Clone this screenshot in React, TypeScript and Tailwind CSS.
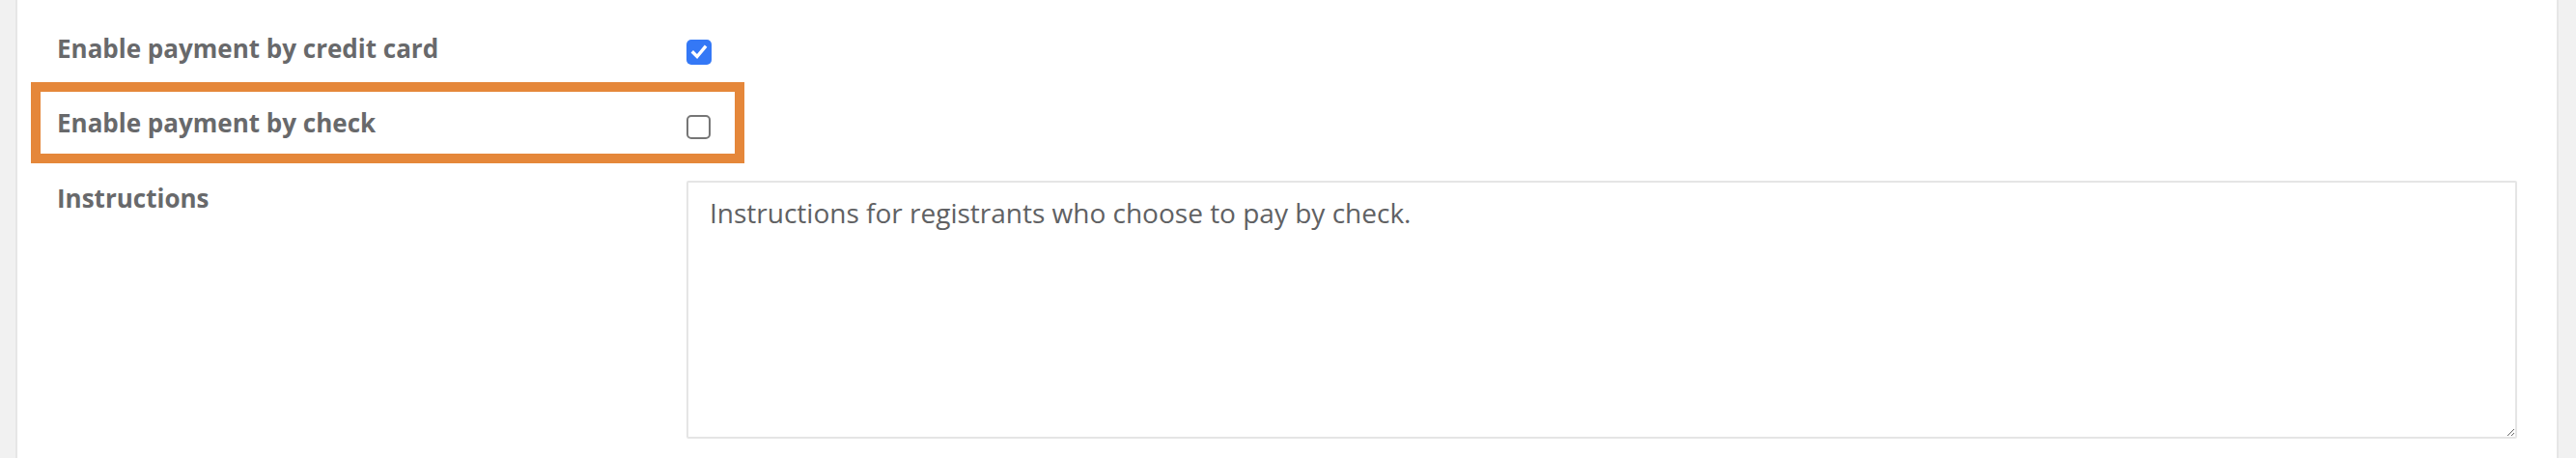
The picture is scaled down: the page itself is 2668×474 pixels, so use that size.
import React from "react";

function CheckedBox() {
  return (
    <div className="w-[26px] h-[26px] rounded-[5px] bg-[#3478f6] flex items-center justify-center">
      <svg width="20" height="20" viewBox="0 0 20 20" fill="none">
        <path d="M4 10.5 L8 14.5 L16 5" stroke="white" strokeWidth="3.4" strokeLinecap="square" strokeLinejoin="miter" />
      </svg>
    </div>
  );
}

function EmptyBox() {
  return <div className="w-[25px] h-[25px] rounded-[5px] border-2 border-[#767676] bg-white" />;
}

export default function App() {
  const font = { fontFamily: '"Open Sans", "Noto Sans", sans-serif' };
  return (
    <div className="w-[2668px] h-[474px] bg-[#f1f1f1] flex overflow-hidden" style={font}>
      <div className="ml-[16px] w-[2634px] h-full bg-white border-x-2 border-[#e6e6e6] pl-[14px] pt-[32px]">
        {/* Row 1 */}
        <div className="flex items-start pl-[27px] h-[36px]">
          <div className="w-[652px] text-[26px] leading-[36px] font-bold text-[#68696b]">
            Enable payment by credit card
          </div>
          <div className="mt-[9px]">
            <CheckedBox />
          </div>
        </div>
        {/* Row 2 (highlighted) */}
        <div className="mt-[17px] w-[739px] h-[84px] border-[10px] border-[#e5873a] pl-[17px] pt-[14px] flex items-start">
          <div className="w-[652px] text-[26px] leading-[36px] font-bold text-[#68696b]">
            Enable payment by check
          </div>
          <div className="mt-[10px]">
            <EmptyBox />
          </div>
        </div>
        {/* Row 3 */}
        <div className="mt-[18px] flex items-start pl-[27px]">
          <div className="w-[652px] text-[26px] leading-[36px] font-bold text-[#68696b]">
            Instructions
          </div>
          <textarea
            className="w-[1896px] h-[267px] border-2 border-[#e5e5e5] rounded-[2px] bg-white text-[28px] leading-[38px] text-[#606163] pl-[22px] pt-[12px] outline-none"
            style={font}
            defaultValue="Instructions for registrants who choose to pay by check."
          />
        </div>
      </div>
    </div>
  );
}
